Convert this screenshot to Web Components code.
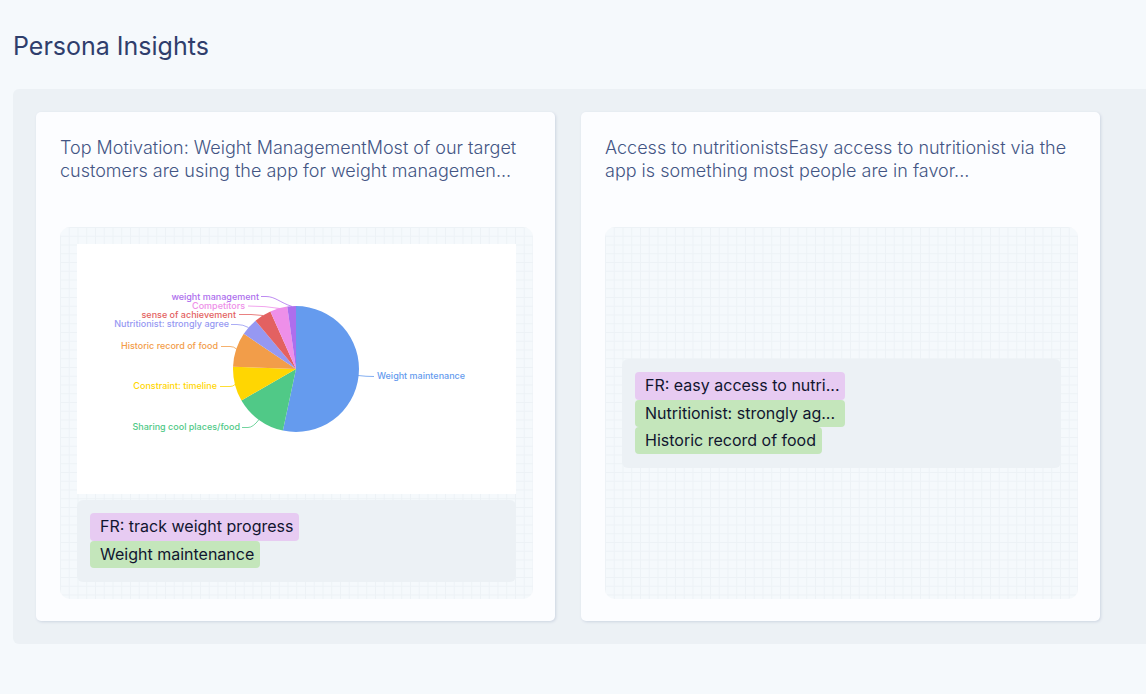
<!DOCTYPE html>
<html lang="en">
  <head>
    <meta charset="utf-8">
    <title>Persona Insights</title>
    <style>
      body {
        margin: 0;
        background: #f5f9fc;
        font-family: Inter, "Liberation Sans", sans-serif;
      }
    </style>
  </head>
  <body>
    <template id="boardTmpl">
      <style>
        :host {
          display: block;
          padding: 28px 0 50px 13px;
        }
        h1 {
          margin: 0 0 25px;
          color: #2f3e6c;
          font-size: 25px;
          font-weight: 400;
          line-height: 36px;
        }
        .panel {
          display: flex;
          gap: 26px;
          padding: 23px 46px 23px 23px;
          background: #ecf1f5;
          border-radius: 6px 0 0 6px;
        }
      </style>
      <h1><slot name="title"></slot></h1>
      <section class="panel"><slot></slot></section>
    </template>

    <template id="cardTmpl">
      <style>
        :host {
          display: flex;
          flex: 1 1 0;
          flex-direction: column;
          min-width: 0;
          box-sizing: border-box;
          padding: 24px 22px 22px 24px;
          background: #fcfdff;
          border-radius: 5px;
          box-shadow: 1px 1px 3px #cdd5e1;
        }
        p {
          min-height: 69px;
          margin: 0 0 22px;
          color: #435584;
          font-size: 18px;
          font-weight: 300;
          line-height: 23px;
        }
        .preview {
          display: flex;
          flex: 1;
          flex-direction: column;
          justify-content: center;
          gap: 6px;
          min-height: 337px;
          padding: 17px;
          border-radius: 10px;
          background-color: #f5f9fc;
          background-image:
            linear-gradient(#edf2f6 1px, transparent 1px),
            linear-gradient(90deg, #edf2f6 1px, transparent 1px);
          /* four cells every 35px */
          background-size: calc(35px / 4) calc(35px / 4);
        }
      </style>
      <p><slot name="summary"></slot></p>
      <div class="preview"><slot></slot></div>
    </template>

    <template id="tagListTmpl">
      <style>
        :host {
          display: flex;
          flex-direction: column;
          align-items: flex-start;
          padding: 13px 13px 14px;
          background: #ecf1f5;
          border-radius: 6px;
        }
      </style>
      <slot></slot>
    </template>

    <template id="tagTmpl">
      <style>
        :host {
          display: block;
          box-sizing: border-box;
          max-width: 210px;
          padding: 0 6px 0 10px;
          overflow: hidden;
          border-radius: 4px;
          background: #c4e6bb;
          color: #11152f;
          font-size: 16px;
          line-height: 27px;
          white-space: nowrap;
        }
        :host([kind="request"]) {
          padding-bottom: 1px;
          background: #e7cbf2;
        }
        :host([shortened]) {
          width: 210px;
        }
      </style>
      <slot></slot>
    </template>

    <template id="pieTmpl">
      <style>
        :host {
          display: block;
          background: #fff;
        }
        svg {
          display: block;
          font-size: 9px;
          font-weight: 500;
        }
      </style>
      <svg width="438" height="250" viewBox="0 0 438 250" role="img" aria-label="Tags by share"></svg>
    </template>

    <script>
      function define(name, tmpl) {
        customElements.define(name, class extends HTMLElement {
          connectedCallback() {
            this.attachShadow({mode: 'open'}).append(tmpl.content.cloneNode(true))
          }
        })
      }

      define('insight-board', boardTmpl)
      define('insight-card', cardTmpl)
      define('tag-list', tagListTmpl)
      define('tag-item', tagTmpl)

      // x, y: where the label is anchored; line: leader from label to slice
      const slices = [
        {label: 'Weight maintenance', count: 24, color: '#659bee', x: 300, y: 135, line: 'M281 131.5q8 1 16 1'},
        {label: 'Sharing cool places/food', count: 6, color: '#50c987', x: 163, y: 186, line: 'M165 183.5h6q5 0 11-8'},
        {label: 'Constraint: timeline', count: 4, color: '#ffd602', x: 140, y: 145, line: 'M143 142.5h10q3 0 5-2'},
        {label: 'Historic record of food', count: 4, color: '#f29d49', x: 141, y: 105, line: 'M144 102.5h9q4 0 6.5 2.5'},
        {label: 'Nutritionist: strongly agree', count: 2, color: '#9698f2', x: 152, y: 83, line: 'M154 80.5h6q6 0 11.5 3'},
        {label: 'sense of achievement', count: 2, color: '#e36161', x: 159, y: 74, line: 'M162 70.5h12l12 1'},
        {label: 'Competitors', count: 2, color: '#ee8fe9', x: 168, y: 65, line: 'M171 62q18 0 32 2.5'},
        {label: 'weight management', count: 1, color: '#ad6eed', x: 182, y: 56, line: 'M184 52.5h5c9 0 14 6 26 10'}
      ]

      customElements.define('pie-chart', class extends HTMLElement {
        connectedCallback() {
          this.attachShadow({mode: 'open'}).append(pieTmpl.content.cloneNode(true))
          const cx = 219, cy = 125, r = 63
          const total = slices.reduce((sum, s) => sum + s.count, 0)
          const point = n => {
            const a = n / total * Math.PI * 2
            return `${cx + r * Math.sin(a)} ${cy - r * Math.cos(a)}`
          }
          let start = 0
          let html = ''
          for (const s of slices) {
            const end = start + s.count
            const large = s.count > total / 2 ? 1 : 0
            html += `
              <path fill="${s.color}" d="M${cx} ${cy}L${point(start)}A${r} ${r} 0 ${large} 1 ${point(end)}Z"/>
              <path fill="none" stroke="${s.color}" stroke-opacity=".8" d="${s.line}"/>
              <text x="${s.x}" y="${s.y}" fill="${s.color}" text-anchor="${s.x > cx ? 'start' : 'end'}">${s.label}</text>`
            start = end
          }
          this.shadowRoot.querySelector('svg').innerHTML = html
        }
      })
    </script>

    <insight-board>
      <span slot="title">Persona Insights</span>
      <insight-card>
        <span slot="summary">Top Motivation: Weight ManagementMost of our target customers are using the app for weight managemen...</span>
        <pie-chart></pie-chart>
        <tag-list>
          <tag-item kind="request">FR: track weight progress</tag-item>
          <tag-item>Weight maintenance</tag-item>
        </tag-list>
      </insight-card>
      <insight-card>
        <span slot="summary">Access to nutritionistsEasy access to nutritionist via the app is something most people are in favor...</span>
        <tag-list>
          <tag-item kind="request" shortened>FR: easy access to nutri...</tag-item>
          <tag-item shortened>Nutritionist: strongly ag...</tag-item>
          <tag-item>Historic record of food</tag-item>
        </tag-list>
      </insight-card>
    </insight-board>
  </body>
</html>
